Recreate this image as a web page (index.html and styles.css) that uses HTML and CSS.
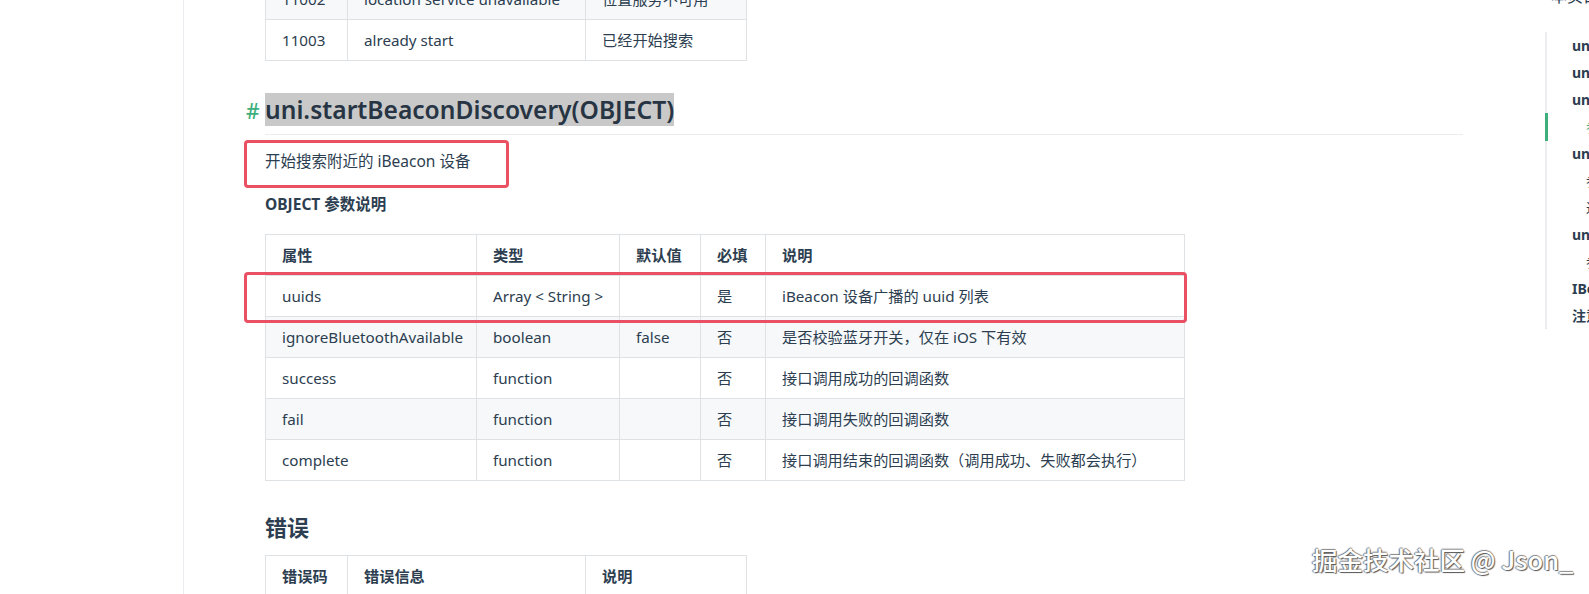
FILE: index.html
```html
<!DOCTYPE html>
<html lang="zh-CN">
<head>
<meta charset="utf-8">
<title>uni.startBeaconDiscovery</title>
<link rel="stylesheet" href="styles.css">
</head>
<body>
<div class="layout">
  <aside class="sidebar"></aside>
  <main class="main">
    <div class="content">
      <table class="err top">
        <colgroup><col class="c1"><col class="c2"><col class="c3"></colgroup>
        <tbody>
          <tr><td>11002</td><td>location service unavailable</td><td>位置服务不可用</td></tr>
          <tr><td>11003</td><td>already start</td><td>已经开始搜索</td></tr>
        </tbody>
      </table>

      <h2 class="title"><a class="anchor">#</a><span class="hl">uni.startBeaconDiscovery(OBJECT)</span></h2>

      <div class="mark"><p class="desc">开始搜索附近的 iBeacon 设备</p></div>

      <p class="sub"><strong>OBJECT 参数说明</strong></p>

      <div class="table-wrap">
        <table class="params">
          <colgroup><col class="p1"><col class="p2"><col class="p3"><col class="p4"><col class="p5"></colgroup>
          <thead>
            <tr><th>属性</th><th>类型</th><th>默认值</th><th>必填</th><th>说明</th></tr>
          </thead>
          <tbody>
            <tr><td>uuids</td><td>Array &lt; String &gt;</td><td></td><td>是</td><td>iBeacon 设备广播的 uuid 列表</td></tr>
            <tr><td>ignoreBluetoothAvailable</td><td>boolean</td><td>false</td><td>否</td><td>是否校验蓝牙开关，仅在 iOS 下有效</td></tr>
            <tr><td>success</td><td>function</td><td></td><td>否</td><td>接口调用成功的回调函数</td></tr>
            <tr><td>fail</td><td>function</td><td></td><td>否</td><td>接口调用失败的回调函数</td></tr>
            <tr><td>complete</td><td>function</td><td></td><td>否</td><td>接口调用结束的回调函数（调用成功、失败都会执行）</td></tr>
          </tbody>
        </table>
        <div class="mark-row"></div>
      </div>

      <h3 class="h3">错误</h3>

      <table class="err">
        <colgroup><col class="c1"><col class="c2"><col class="c3"></colgroup>
        <thead>
          <tr><th>错误码</th><th>错误信息</th><th>说明</th></tr>
        </thead>
        <tbody>
          <tr><td>0</td><td>ok</td><td>正常</td></tr>
        </tbody>
      </table>
    </div>
  </main>
  <nav class="toc">
    <div class="toc-title">本页目录</div>
    <ul class="toc-list">
      <li>uni.startBeaconDiscovery</li>
      <li>uni.stopBeaconDiscovery</li>
      <li>uni.getBeacons</li>
      <li class="child active">参数说明</li>
      <li>uni.onBeaconUpdate</li>
      <li class="child">参数说明</li>
      <li class="child">返回值</li>
      <li>uni.onBeaconServiceChange</li>
      <li class="child">参数说明</li>
      <li>IBeaconInfo</li>
      <li>注意事项</li>
    </ul>
  </nav>
</div>
<div class="watermark">掘金技术社区 @ Json_</div>
</body>
</html>
```

FILE: styles.css
```css
html, body {
  margin: 0;
  padding: 0;
  background: #fff;
}
body {
  font-family: "Noto Sans", "Noto Sans CJK SC", sans-serif;
  color: #2c3e50;
  width: 1589px;
  height: 594px;
  overflow: hidden;
  position: relative;
}
.layout {
  display: flex;
  height: 594px;
  overflow: hidden;
}
.sidebar {
  flex: 0 0 183px;
  border-right: 1px solid #eaecef;
}
.main {
  flex: 0 0 1361px;
  padding-left: 81px;
  box-sizing: border-box;
}
.content {
  width: 1198px;
}

/* tables */
table {
  border-collapse: collapse;
  table-layout: fixed;
  font-size: 15.2px;
}
td, th {
  border: 1px solid #dfe2e5;
  padding: 8px 16px;
  line-height: 24px;
  text-align: left;
  white-space: nowrap;
  overflow: hidden;
}
th {
  font-weight: 700;
}
tbody tr:nth-child(2n) {
  background: #f6f8fa;
}
.err {
  width: 481px;
}
.err .c1 { width: 82px; }
.err .c2 { width: 238px; }
.err .c3 { width: 161px; }
.err.top {
  margin-top: -22px;
}
.err.top tbody tr:nth-child(1) { background: #f6f8fa; }
.err.top tbody tr:nth-child(2) { background: #fff; }

.params {
  width: 919px;
}
.p1 { width: 211px; }
.p2 { width: 143px; }
.p3 { width: 81px; }
.p4 { width: 65px; }
.p5 { width: 419px; }

/* heading */
.title {
  margin: 32px 0 0;
  padding-bottom: 6px;
  border-bottom: 1px solid #eaecef;
  font-size: 24.6px;
  line-height: 33px;
  font-weight: 600;
  color: #2c3e50;
}
.anchor {
  display: inline-block;
  margin-left: -19px;
  width: 19px;
  font-size: 21px;
  color: #3eaf7c;
  font-weight: 500;
}
.hl {
  background: #c9c9c9;
  color: #273444;
}

/* red marks */
.mark {
  margin: 5px 0 0 -21px;
  width: 241px;
  padding: 6px 0 12px 18px;
  border: 3px solid #ea5063;
  border-radius: 4px;
}
.desc {
  margin: 0;
  font-size: 15.5px;
  line-height: 24px;
}
.sub {
  margin: 4px 0 0;
  font-size: 15.5px;
  line-height: 24px;
}
.table-wrap {
  position: relative;
  margin-top: 18px;
}
.mark-row {
  position: absolute;
  left: -21px;
  top: 38px;
  width: 937px;
  height: 45px;
  border: 3px solid #ea5063;
  border-radius: 4px;
}
.h3 {
  margin: 31px 0 13px;
  font-size: 22px;
  line-height: 30px;
  font-weight: 700;
}

/* toc */
.toc {
  flex: 1;
  margin-top: -16px;
  white-space: nowrap;
}
.toc-title {
  padding-left: 6px;
  font-size: 16px;
  line-height: 24px;
}
.toc-list {
  list-style: none;
  margin: 24px 0 0;
  padding: 0 0 0 25px;
  border-left: 2px solid #eaecef;
}
.toc-list li {
  position: relative;
  font-size: 14px;
  line-height: 27px;
  font-weight: 700;
}
.toc-list li.child {
  padding-left: 14px;
  font-weight: 400;
}
.toc-list li.active {
  color: #3eaf7c;
}
.toc-list li.active::before {
  content: "";
  position: absolute;
  left: -27px;
  top: 0;
  width: 3px;
  height: 28px;
  background: #3eaf7c;
}

/* watermark */
.watermark {
  position: absolute;
  left: 1312px;
  top: 545px;
  font-family: "Noto Sans CJK SC", sans-serif;
  font-size: 25.5px;
  line-height: 28px;
  font-weight: 500;
  color: #fff;
  text-shadow: 1px 1px 1px #555, -1px 0 1px #777, 0 -1px 1px #888;
  white-space: nowrap;
}
```
